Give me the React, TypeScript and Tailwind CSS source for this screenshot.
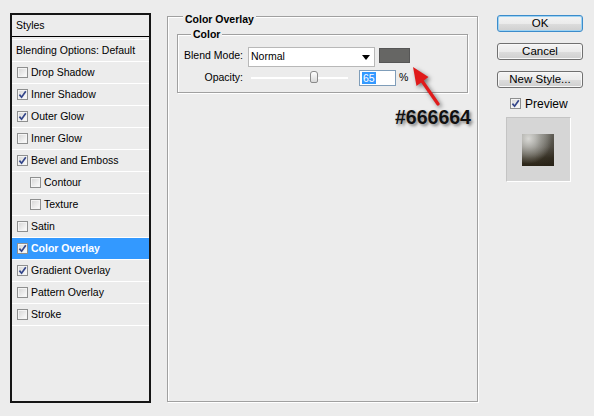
import React from "react";

function Check({ checked }: { checked: boolean }) {
  return (
    <span className="w-[11px] h-[11px] border border-[#8e8f8f] bg-[linear-gradient(135deg,#d4d4d4,#ffffff)] flex items-center justify-center shrink-0 shadow-[inset_0_0_0_1px_#f4f4f4]">
      {checked && (
        <svg width="9" height="9" viewBox="0 0 9 9">
          <path d="M1.4 4.6 L3.6 7.2 L7.8 1.3" fill="none" stroke="#34468a" strokeWidth="1.7" />
        </svg>
      )}
    </span>
  );
}

const rows: { label: string; checked: boolean; indent?: boolean; selected?: boolean }[] = [
  { label: "Drop Shadow", checked: false },
  { label: "Inner Shadow", checked: true },
  { label: "Outer Glow", checked: true },
  { label: "Inner Glow", checked: false },
  { label: "Bevel and Emboss", checked: true },
  { label: "Contour", checked: false, indent: true },
  { label: "Texture", checked: false, indent: true },
  { label: "Satin", checked: false },
  { label: "Color Overlay", checked: true, selected: true },
  { label: "Gradient Overlay", checked: true },
  { label: "Pattern Overlay", checked: false },
  { label: "Stroke", checked: false },
];

function Button({ label, primary }: { label: string; primary?: boolean }) {
  return (
    <div
      className={
        "w-[86px] h-[17px] rounded-[3px] border flex items-center justify-center text-[11.5px] leading-none bg-[linear-gradient(to_bottom,#f4f4f4_0%,#ebebeb_50%,#dddddd_51%,#cfcfcf_100%)] " +
        (primary
          ? "border-[#3c8ccb] shadow-[inset_0_0_0_1px_#9ed3f3]"
          : "border-[#707070] shadow-[inset_0_0_0_1px_#f8f8f8]")
      }
    >
      {label}
    </div>
  );
}

export default function App() {
  return (
    <div className="relative w-[594px] h-[416px] bg-[#ececec] flex items-start pl-[10px] pt-[13px] font-['Liberation_Sans',Arial,sans-serif] text-black overflow-hidden">
      {/* Left styles list */}
      <div className="w-[141px] h-[390px] border-2 border-[#151515] flex flex-col text-[10.5px]">
        <div className="h-[22px] shrink-0 border-b border-black flex items-center pl-[4px]">Styles</div>
        <div className="h-[2px] shrink-0" />
        <div className="h-[23px] shrink-0 border-t border-[#6a6a6a] border-b border-white flex items-center pl-[4px]">
          Blending Options: Default
        </div>
        {rows.map((r) => (
          <div
            key={r.label}
            className={
              "h-[22px] shrink-0 border-b border-white flex items-center gap-[3px] " +
              (r.indent ? "pl-[18px] " : "pl-[5px] ") +
              (r.selected ? "bg-[#3399ff] text-white font-bold" : "")
            }
          >
            <Check checked={r.checked} />
            <span>{r.label}</span>
          </div>
        ))}
      </div>

      {/* Main group box */}
      <div className="relative ml-[16px] mt-[3px] w-[311px] h-[386px] border border-[#a0a0a0] shadow-[inset_1px_1px_0_#fff,1px_1px_0_#fff] pl-[9px] pt-[17px] text-[10.5px]">
        <span className="absolute left-[15px] -top-[4px] px-[2px] bg-[#ececec] font-bold leading-[13px]">
          Color Overlay
        </span>
        <div className="relative w-[291px] h-[59px] border border-[#a0a0a0] shadow-[inset_1px_1px_0_#fff,1px_1px_0_#fff] pt-[12px]">
          <span className="absolute left-[13px] -top-[7px] px-[2px] bg-[#ececec] font-bold leading-[13px]">Color</span>
          <div className="flex items-start h-[20px]">
            <span className="w-[65px] text-right leading-[17px]">Blend Mode:</span>
            <div className="ml-[5px] w-[127px] h-[20px] bg-white border border-[#b8b8b8] flex items-center pl-[2px]">
              <span>Normal</span>
              <svg className="ml-auto mr-[4px]" width="8" height="5" viewBox="0 0 8 5">
                <path d="M0 0 H8 L4 5 Z" fill="#000" />
              </svg>
            </div>
            <div className="ml-[4px] mt-[1px] w-[31px] h-[15px] bg-[#666664] border border-[#565656]" />
          </div>
          <div className="mt-[3px] flex items-center h-[16px]">
            <span className="w-[65px] text-right">Opacity:</span>
            <div className="relative ml-[8px] w-[97px] h-[16px] flex items-center">
              <div className="w-full h-[2px] border-t border-[#a8a8a8] border-b border-white" />
              <div className="absolute left-[59px] top-[1px] w-[8px] h-[12px] rounded-t-[3px] rounded-b-[2px] border border-[#8a8a8a] bg-[linear-gradient(to_bottom,#ffffff,#d8d8d8)]" />
            </div>
            <div className="ml-[11px] w-[37px] h-[16px] bg-white border border-[#7f9db9] flex items-center pl-[2px]">
              <span className="bg-[#3399ff] text-white leading-[12px] px-[1px]">65</span>
            </div>
            <span className="ml-[3px]">%</span>
          </div>
        </div>
      </div>

      {/* Right column */}
      <div className="ml-[19px] mt-[2px] w-[86px] flex flex-col gap-[11px]">
        <Button label="OK" primary />
        <Button label="Cancel" />
        <Button label="New Style..." />
        <div className="-mt-[2px] h-[13px] flex items-center pl-[13px] gap-[4px] text-[12px]">
          <Check checked />
          <span>Preview</span>
        </div>
        <div className="-mt-[4px] ml-[9px] w-[65px] h-[65px] bg-[#d6d6d6] border-t border-l border-[#c4c4c4] border-r-white border-b-white border-r border-b pl-[15px] pt-[16px]">
          <div className="w-[32px] h-[32px] bg-[radial-gradient(ellipse_at_20%_15%,rgba(225,225,222,0.9)_0%,rgba(180,180,175,0.55)_35%,rgba(140,138,130,0)_65%),linear-gradient(to_right,rgba(0,0,0,0)_40%,rgba(35,30,20,0.45)_100%),linear-gradient(to_bottom,#8f8e88_0%,#6f6c64_40%,#3b3528_75%,#2a2417_100%)]" />
        </div>
      </div>

      {/* Annotation: arrow */}
      <svg
        className="absolute left-[400px] top-[60px] drop-shadow-[2px_2px_2px_rgba(0,0,0,0.5)]"
        width="50"
        height="55"
        viewBox="400 60 50 55"
      >
        <line x1="420" y1="78" x2="438" y2="104" stroke="#e01b1b" strokeWidth="3.2" strokeLinecap="round" />
        <path d="M413 67 L428.5 77 L416.5 86 Z" fill="#e01b1b" />
      </svg>
      <span className="absolute left-[395px] top-[108px] text-[19.5px] leading-none font-bold text-[#111] [text-shadow:2px_2px_3px_rgba(0,0,0,0.45)]">
        #666664
      </span>
    </div>
  );
}
